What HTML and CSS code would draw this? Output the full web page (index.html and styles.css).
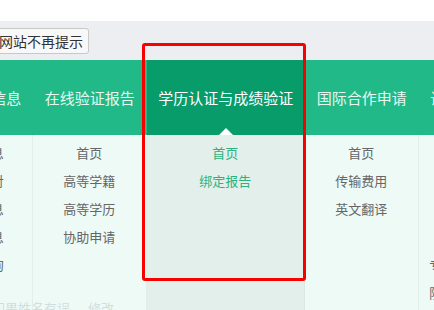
FILE: index.html
```html
<!DOCTYPE html>
<html lang="zh-CN">
  <head>
    <meta charset="UTF-8" />
    <meta name="viewport" content="width=device-width, initial-scale=1.0" />
    <title>学信网</title>
    <link rel="stylesheet" href="styles.css">
  </head>

  <body>
    <div class="topline"></div>

    <div class="notice">
      <button class="btn-hide">本网站不再提示</button>
    </div>

    <div class="header-nav">
      <ul class="nav">
        <li class="nav-item">
          <a class="tab">高等教育信息</a>
          <ul class="sub">
            <li>学籍信息</li>
            <li>图像校对</li>
            <li>学历信息</li>
            <li>学位信息</li>
            <li>在线查询</li>
          </ul>
        </li>
        <li class="nav-item">
          <a class="tab">在线验证报告</a>
          <ul class="sub">
            <li>首页</li>
            <li>高等学籍</li>
            <li>高等学历</li>
            <li>协助申请</li>
          </ul>
        </li>
        <li class="nav-item active">
          <a class="tab">学历认证与成绩验证</a>
          <ul class="sub">
            <li>首页</li>
            <li>绑定报告</li>
          </ul>
        </li>
        <li class="nav-item">
          <a class="tab">国际合作申请</a>
          <ul class="sub">
            <li>首页</li>
            <li>传输费用</li>
            <li>英文翻译</li>
          </ul>
        </li>
        <li class="nav-item">
          <a class="tab">调查问卷中心</a>
          <ul class="sub">
            <li>首页</li>
            <li>参与调查</li>
            <li>结果查询</li>
            <li>我的问卷</li>
            <li>专业满意度调查</li>
            <li>院校满意度调查</li>
          </ul>
        </li>
      </ul>
    </div>

    <div class="content">
      <p class="name-tip">如果姓名有误<a class="edit">修改</a></p>
    </div>

    <!-- annotation -->
    <div class="mark"></div>
  </body>
</html>
```

FILE: styles.css
```css
* {
  box-sizing: border-box;
}

html,
body {
  margin: 0;
  padding: 0;
}

body {
  width: 434px;
  height: 310px;
  overflow: hidden;
  position: relative;
  background: #fff;
  font-family: "Noto Sans CJK SC", "Noto Sans", sans-serif;
}

ul {
  list-style: none;
  margin: 0;
  padding: 0;
}

.topline {
  height: 21px;
  background: #fff;
}

.notice {
  height: 39px;
  background: #eceef2;
  padding-top: 7px;
}

.btn-hide {
  display: block;
  margin-left: -21px;
  height: 26px;
  padding: 0 5px;
  font-family: inherit;
  font-size: 14px;
  line-height: 24px;
  color: #333;
  background: #f8f8f8;
  border: 1px solid #c8c8c8;
  border-radius: 3px;
  white-space: nowrap;
}

.header-nav {
  height: 75px;
  background: #21b987;
  position: relative;
  z-index: 2;
}

.nav {
  display: flex;
  margin-left: -80.5px;
  white-space: nowrap;
}

.nav-item {
  position: relative;
  flex-shrink: 0;
}

.nav-item > .tab {
  display: block;
  position: relative;
  height: 75px;
  padding: 0 11.75px;
  font-size: 15px;
  line-height: 75px;
  color: #e6f8ef;
}

.nav-item.active > .tab {
  background: #089c6b;
  color: #fff;
}

.nav-item.active > .tab::after {
  content: "";
  position: absolute;
  left: 50%;
  bottom: 0;
  margin-left: -7px;
  border: 7px solid transparent;
  border-top: 0;
  border-bottom-color: #fff;
}

/* dropdown panels sit over the page */
.sub {
  position: absolute;
  top: 75px;
  left: 0;
  right: 0;
  height: 190px;
  padding-top: 4px;
  background: rgba(235, 249, 244, 0.86);
  border-right: 1px solid #e0efe9;
}

.sub > li {
  font-size: 13px;
  line-height: 28px;
  text-align: center;
  color: #666;
}

.nav-item:first-child > .sub > li {
  padding-left: 4px;
}

.nav-item.active > .sub {
  background: rgba(221, 236, 232, 0.86);
  border-right-color: #dbe9e5;
}

.nav-item.active > .sub > li {
  color: #2db27f;
}

.content {
  padding-top: 163px;
}

.name-tip {
  margin: 0 0 0 -8px;
  font-size: 13px;
  line-height: 20px;
  color: #333;
}

.name-tip .edit {
  margin-left: 18px;
  color: #333;
}

.mark {
  position: absolute;
  left: 142px;
  top: 43px;
  width: 164px;
  height: 238px;
  border: 3px solid #f60000;
  border-radius: 3px;
  z-index: 5;
}
```
